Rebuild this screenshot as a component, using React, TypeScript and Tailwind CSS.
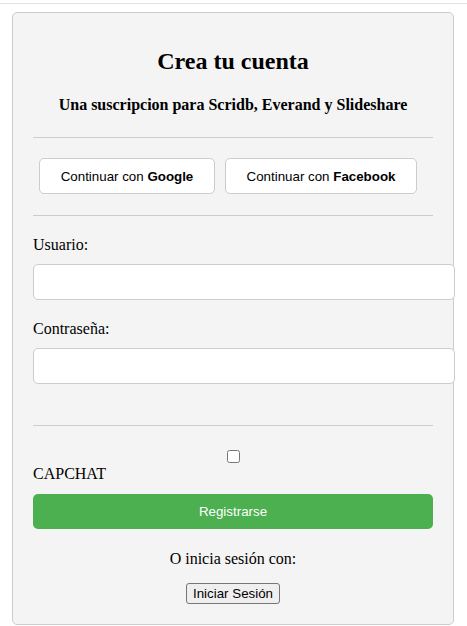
import React from "react"

const serif = "font-['Liberation_Serif',_'Times_New_Roman',_serif]"
const sans = "font-['Liberation_Sans',_Arial,_sans-serif]"

function Field({ label, type }: { label: string; type: string }) {
  return (
    <div>
      <label className={`block mt-[20px] text-[16px] leading-[18px] text-black ${serif}`}>{label}</label>
      <input
        type={type}
        className="block mt-[10px] w-[422px] h-[36px] px-[10px] bg-white border border-[#ccc] rounded-[5px] outline-none"
      />
    </div>
  )
}

export default function App() {
  return (
    <div className="min-h-screen bg-white">
      <div className="h-[3px]" />
      <div className="h-px bg-[#e3e3e3]" />
      <div className="pl-[12px] pt-[8px]">
        <div className={`w-[442px] bg-[#f4f4f4] border border-[#ccc] rounded-[5px] px-5 pt-[34px] pb-5 ${serif}`}>
          <h2 className="text-center text-[24px] leading-[28px] font-bold text-black">Crea tu cuenta</h2>
          <h4 className="mt-[21px] text-center text-[16px] leading-[18px] font-bold text-black">
            Una suscripcion para Scridb, Everand y Slideshare
          </h4>

          <div className="mt-[23px] h-px bg-[#ccc]" />

          <div className={`mt-[20px] ml-[6px] flex gap-[10px] ${sans}`}>
            <button className="w-[176px] h-[36px] bg-white border border-[#ccc] rounded-[5px] text-[13.333px] leading-[15px] text-black">
              Continuar con <b>Google</b>
            </button>
            <button className="w-[192px] h-[36px] bg-white border border-[#ccc] rounded-[5px] text-[13.333px] leading-[15px] text-black">
              Continuar con <b>Facebook</b>
            </button>
          </div>

          <div className="mt-[21px] h-px bg-[#ccc]" />

          <Field label="Usuario:" type="text" />
          <Field label="Contraseña:" type="password" />

          <div className="mt-[41px] h-px bg-[#ccc]" />

          <div className="mt-[24px] flex justify-center">
            <input type="checkbox" className="m-0 w-[13px] h-[13px]" />
          </div>
          <div className="mt-[2px] text-[16px] leading-[18px] text-black">CAPCHAT</div>

          <button
            className={`mt-[11px] block w-full h-[35px] bg-[#4caf50] rounded-[5px] text-white text-[13.333px] leading-[15px] ${sans}`}
          >
            Registrarse
          </button>

          <p className="mt-[21px] text-center text-[16px] leading-[18px] text-black">O inicia sesión con:</p>

          <div className="mt-[15px] flex justify-center">
            <button
              className={`h-[21px] px-[6px] bg-[#efefef] border border-[#767676] rounded-[3px] text-[13.333px] leading-[15px] text-black ${sans}`}
            >
              Iniciar Sesión
            </button>
          </div>
        </div>
      </div>
    </div>
  )
}
